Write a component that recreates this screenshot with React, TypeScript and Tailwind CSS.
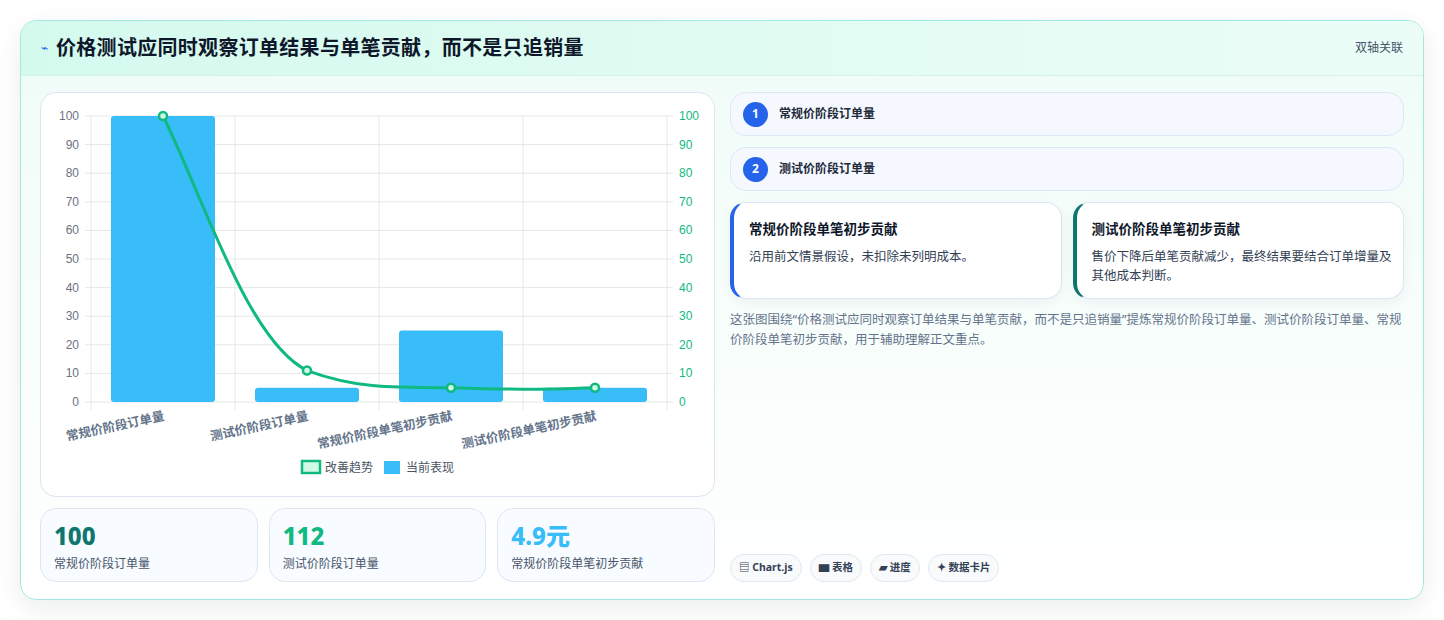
import React from "react";

const F = { fontFamily: '"Noto Sans", "Noto Sans CJK SC", sans-serif' };

function Chart() {
  const x0 = 50, x1 = 626, y0 = 23, y1 = 309;
  const h = y1 - y0;
  const yv = (v: number) => y1 - (v / 100) * h;
  const cw = (x1 - x0) / 4;
  const bars = [100, 5, 25, 5];
  const line = [100, 11, 5, 5];
  const pts = line.map((v, i) => [x0 + cw * i + cw / 2, yv(v)]);
  const ticks = [0, 10, 20, 30, 40, 50, 60, 70, 80, 90, 100];
  const labels = ["常规价阶段订单量", "测试价阶段订单量", "常规价阶段单笔初步贡献", "测试价阶段单笔初步贡献"];
  const d = `M${pts[0][0]},${pts[0][1]} C${pts[0][0] + 40},${pts[0][1] + 80} ${pts[1][0] - 60},${pts[1][1] - 30} ${pts[1][0]},${pts[1][1]} C${pts[1][0] + 50},${pts[1][1] + 18} ${pts[2][0] - 60},${pts[2][1]} ${pts[2][0]},${pts[2][1]} C${pts[2][0] + 60},${pts[2][1] + 2} ${pts[3][0] - 60},${pts[3][1] + 2} ${pts[3][0]},${pts[3][1]}`;
  return (
    <svg width="674" height="404" style={{ fontFamily: '"Liberation Sans", "Noto Sans CJK SC", sans-serif' }}>
      {ticks.map((t) => (
        <g key={t}>
          <line x1={x0 - 6} x2={x1 + 6} y1={yv(t)} y2={yv(t)} stroke="#e5e7eb" />
          <text x={x0 - 12} y={yv(t) + 4} fontSize="12" fill="#6b7280" textAnchor="end">{t}</text>
          <text x={x1 + 12} y={yv(t) + 4} fontSize="12" fill="#10b981">{t}</text>
        </g>
      ))}
      {[0, 1, 2, 3, 4].map((i) => (
        <line key={i} x1={x0 + cw * i} x2={x0 + cw * i} y1={y0} y2={y1 + 8} stroke="#e5e7eb" />
      ))}
      {bars.map((v, i) => (
        <rect key={i} x={x0 + cw * i + 20} y={yv(v)} width={cw - 40} height={y1 - yv(v)} rx="3" fill="#38bdf8" />
      ))}
      <path d={d} fill="none" stroke="#10b981" strokeWidth="3" />
      {pts.map(([x, y], i) => (
        <circle key={i} cx={x} cy={y} r="4" fill="#d1fae5" stroke="#10b981" strokeWidth="2.5" />
      ))}
      {labels.map((l, i) => (
        <text key={i} x={x0 + cw * i + cw / 2 + 2} y={y1 + 18} fontSize="12.5" fontWeight="600" fill="#64748b" textAnchor="end" transform={`rotate(-12 ${x0 + cw * i + cw / 2 + 2} ${y1 + 18})`} style={F}>{l}</text>
      ))}
      <rect x="261" y="368" width="18" height="12" fill="#d1fae5" stroke="#10b981" strokeWidth="2.5" />
      <text x="284" y="379" fontSize="12" fill="#4b5563" style={F}>改善趋势</text>
      <rect x="343" y="368" width="16" height="13" fill="#38bdf8" />
      <text x="365" y="379" fontSize="12" fill="#4b5563" style={F}>当前表现</text>
    </svg>
  );
}

function Stat({ v, l, c }: { v: string; l: string; c: string }) {
  return (
    <div className="flex-1 h-[74px] rounded-2xl border border-[#dbe7f3] bg-[#f8fbff] px-[13px] pt-[12px]">
      <div className={`text-[24px] leading-[30px] font-extrabold ${c}`}>{v}</div>
      <div className="text-[12px] mt-[4px] text-[#475569]">{l}</div>
    </div>
  );
}

export default function App() {
  return (
    <div className="w-[1444px] h-[620px] bg-white pt-[20px] px-[20px]" style={F}>
      <div className="h-[580px] rounded-[16px] border border-[#a5e8e0] overflow-hidden bg-gradient-to-b from-[#effcf7] to-white shadow-[0_8px_24px_rgba(15,23,42,0.08)] flex flex-col">
        <div className="h-[55px] shrink-0 flex items-center justify-between px-[20px] bg-gradient-to-r from-[#d4faee] to-[#ecfdf8] border-b border-[#d4f1ea]">
          <div className="flex items-center gap-[8px]">
            <span className="text-[12px] text-[#2563eb]">⌁</span>
            <span className="text-[20px] tracking-[0.3px] font-bold text-[#0f172a]">价格测试应同时观察订单结果与单笔贡献，而不是只追销量</span>
          </div>
          <span className="text-[12px] text-[#475569]">双轴关联</span>
        </div>
        <div className="flex-1 flex gap-[15px] px-[19px] pt-[16px] pb-[18px]">
          <div className="w-[675px] flex flex-col gap-[11px]">
            <div className="h-[405px] rounded-2xl border border-[#dbe4ef] bg-white">
              <Chart />
            </div>
            <div className="flex gap-[11px]">
              <Stat v="100" l="常规价阶段订单量" c="text-[#0f766e]" />
              <Stat v="112" l="测试价阶段订单量" c="text-[#10b981]" />
              <Stat v="4.9元" l="常规价阶段单笔初步贡献" c="text-[#38bdf8]" />
            </div>
          </div>
          <div className="w-[676px] flex flex-col">
            {["常规价阶段订单量", "测试价阶段订单量"].map((t, i) => (
              <div key={i} className="h-[44px] mb-[11px] rounded-2xl border border-[#dbe7f5] bg-[#f5f9ff] flex items-center px-[12px] gap-[11px]">
                <span className="w-[25px] h-[25px] rounded-full bg-[#2563eb] text-white text-[12px] font-bold flex items-center justify-center">{i + 1}</span>
                <span className="text-[12px] font-semibold text-[#1e293b]">{t}</span>
              </div>
            ))}
            <div className="flex gap-[11px]">
              <div className="flex-1 h-[97px] rounded-2xl border border-[#dbe7f5] border-l-[4px] border-l-[#2563eb] bg-white pl-[15px] pr-[10px] pt-[16px] shadow-[0_4px_12px_rgba(15,23,42,0.05)]">
                <div className="text-[13.5px] font-bold text-[#0f172a]">常规价阶段单笔初步贡献</div>
                <div className="text-[12.5px] mt-[8px] text-[#334155] leading-[19px]">沿用前文情景假设，未扣除未列明成本。</div>
              </div>
              <div className="flex-1 h-[97px] rounded-2xl border border-[#dbe7f5] border-l-[4px] border-l-[#0f766e] bg-white pl-[15px] pr-[10px] pt-[16px] shadow-[0_4px_12px_rgba(15,23,42,0.05)]">
                <div className="text-[13.5px] font-bold text-[#0f172a]">测试价阶段单笔初步贡献</div>
                <div className="text-[12.5px] mt-[8px] text-[#334155] leading-[19px]">售价下降后单笔贡献减少，最终结果要结合订单增量及其他成本判断。</div>
              </div>
            </div>
            <p className="text-[12.5px] text-[#64748b] leading-[20px] mt-[11px]">这张图围绕“价格测试应同时观察订单结果与单笔贡献，而不是只追销量”提炼常规价阶段订单量、测试价阶段订单量、常规价阶段单笔初步贡献，用于辅助理解正文重点。</p>
            <div className="mt-auto flex gap-[8px]">
              {["▤ Chart.js", "▆ 表格", "▰ 进度", "✦ 数据卡片"].map((c) => (
                <span key={c} className="h-[28px] px-[8px] rounded-full border border-[#e2e8f0] bg-[#f8fafc] text-[10.5px] font-bold text-[#334155] flex items-center">{c}</span>
              ))}
            </div>
          </div>
        </div>
      </div>
    </div>
  );
}
